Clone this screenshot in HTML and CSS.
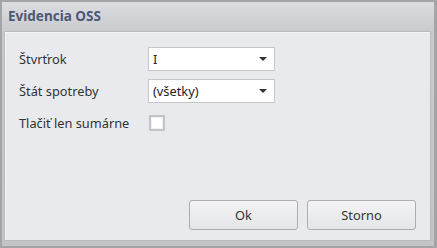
FILE: index.html
```html
<!DOCTYPE html>
<html>
<head>
<meta charset="utf-8">
<title>Evidencia OSS</title>
<link rel="stylesheet" href="styles.css">
</head>
<body>
<div class="dialog">
	<div class="titlebar">Evidencia OSS</div>
	<div class="panel">
		<div class="form">
			<div class="row">
				<label class="caption">Štvrťrok</label>
				<div class="combo"><span>I</span><i class="arrow"></i></div>
			</div>
			<div class="row">
				<label class="caption">Štát spotreby</label>
				<div class="combo"><span>(všetky)</span><i class="arrow"></i></div>
			</div>
			<div class="row">
				<label class="caption">Tlačiť len sumárne</label>
				<div class="check"></div>
			</div>
		</div>
		<div class="buttons">
			<button class="btn">Ok</button>
			<button class="btn">Storno</button>
		</div>
	</div>
</div>
</body>
</html>
```

FILE: styles.css
```css
body{
	margin: 0;
	padding: 0;
	background: #a6a6a9;
	font-family: "Noto Sans", "Open Sans", Arial, sans-serif;
	font-size: 12px;
	color: #2b2b2b;
}
.dialog{
	width: 437px;
	height: 248px;
	box-sizing: border-box;
	border-style: solid;
	border-color: #a4a4a7;
	border-width: 2px 3px 2px 2px;
	background: linear-gradient(#dcdde1, #c9cace 30px, #c3c4c8);
	display: flex;
	flex-direction: column;
}
.titlebar{
	height: 29px;
	padding-left: 6px;
	line-height: 28px;
	font-weight: bold;
	font-size: 13.5px;
	color: #4c5876;
}
.panel{
	flex: 1;
	margin: 0 3px 5px 2px;
	border: 1px solid #b9babe;
	box-shadow: inset 1px 1px 0 #f4f5f7;
	background: #e9eaee;
	display: flex;
	flex-direction: column;
}
.form{
	padding: 15px 0 0 14px;
	display: flex;
	flex-direction: column;
	gap: 8px;
}
.row{
	display: flex;
	align-items: center;
	height: 24px;
}
.caption{
	width: 129px;
	font-size: 12.8px;
	color: #333;
}
.combo{
	height: 22px;
	border: 1px solid #c6c7cb;
	background: #fff;
	display: flex;
	align-items: center;
	justify-content: space-between;
	padding: 0 7px 0 4px;
	width: 114px;
	font-size: 12.8px;
	color: #222;
}
.arrow{
	width: 0;
	height: 0;
	border-left: 4px solid transparent;
	border-right: 4px solid transparent;
	border-top: 4px solid #333;
}
.check{
	width: 12px;
	height: 12px;
	margin-left: 1px;
	border: 2px solid #c3c4c9;
	background: #fff;
	box-shadow: inset 0 0 0 1px #f2f2f4;
}
.buttons{
	margin-top: auto;
	display: flex;
	justify-content: flex-end;
	gap: 9px;
	padding: 0 14px 10px 0;
}
.btn{
	width: 109px;
	height: 30px;
	border: 1px solid #acadb1;
	border-radius: 3px;
	background: linear-gradient(#f3f3f5, #e4e5e8);
	font-family: "Noto Sans", "Open Sans", Arial, sans-serif;
	font-size: 12.8px;
	color: #333;
	padding: 0;
}
```
